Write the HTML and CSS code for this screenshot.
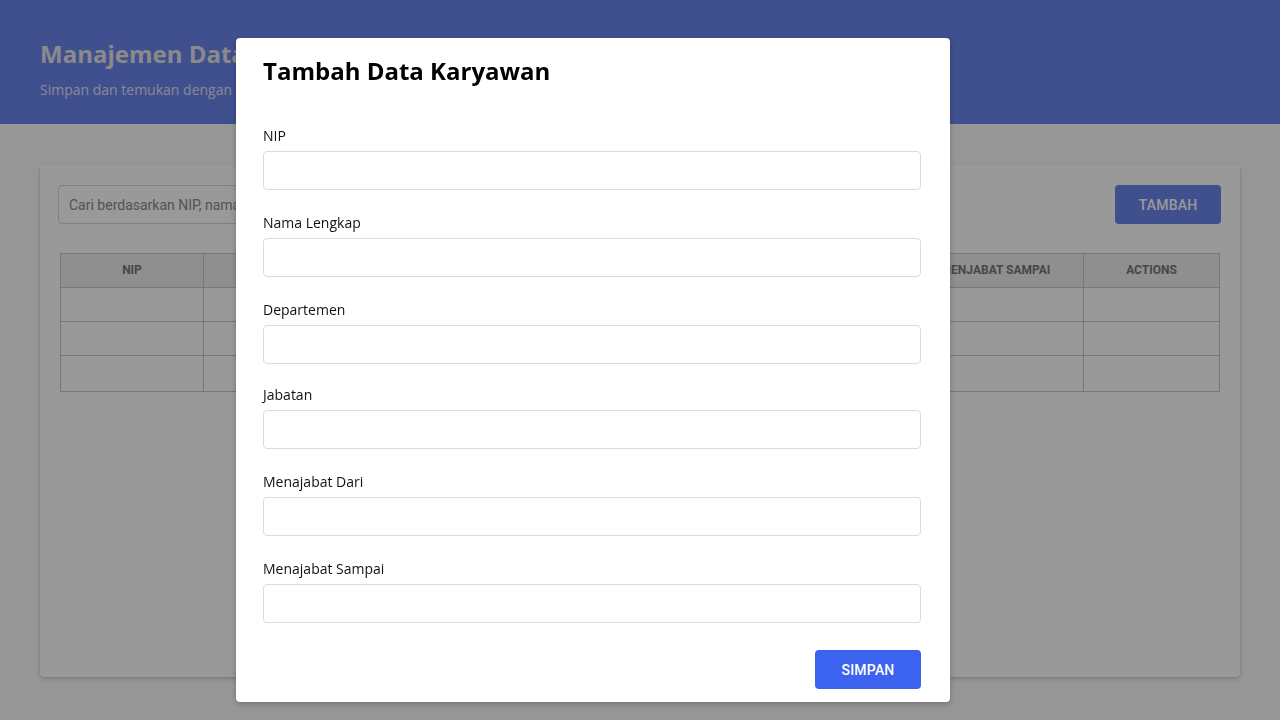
FILE: index.html
```html
<!DOCTYPE html>
<html lang="id">
<head>
<meta charset="utf-8">
<title>Manajemen Data Karyawan</title>
<link rel="stylesheet" href="styles.css">
</head>
<body>
<header class="hero">
  <h1 class="hero-title">Manajemen Data Karyawan</h1>
  <p class="hero-sub">Simpan dan temukan dengan mudah data karyawan Anda</p>
</header>
<main class="page">
  <section class="card">
    <div class="toolbar">
      <input class="search" type="text" placeholder="Cari berdasarkan NIP, nama, departemen atau jabatan">
      <button class="btn btn-add">TAMBAH</button>
    </div>
    <table class="grid">
      <thead>
        <tr>
          <th class="c-nip">NIP</th>
          <th class="c-mid">NAMA LENGKAP</th>
          <th class="c-mid">DEPARTEMEN</th>
          <th class="c-mid">JABATAN</th>
          <th class="c-mid">MENJABAT DARI</th>
          <th class="c-mid">MENJABAT SAMPAI</th>
          <th class="c-act">ACTIONS</th>
        </tr>
      </thead>
      <tbody>
        <tr><td></td><td></td><td></td><td></td><td></td><td></td><td></td></tr>
        <tr><td></td><td></td><td></td><td></td><td></td><td></td><td></td></tr>
        <tr class="last"><td></td><td></td><td></td><td></td><td></td><td></td><td></td></tr>
      </tbody>
    </table>
  </section>
</main>
<div class="overlay"></div>
<div class="modal">
  <h2 class="modal-title">Tambah Data Karyawan</h2>
  <form class="form">
    <div class="field">
      <label class="label">NIP</label>
      <input class="input" type="text">
    </div>
    <div class="field">
      <label class="label">Nama Lengkap</label>
      <input class="input" type="text">
    </div>
    <div class="field">
      <label class="label">Departemen</label>
      <input class="input" type="text">
    </div>
    <div class="field field-tight">
      <label class="label">Jabatan</label>
      <input class="input" type="text">
    </div>
    <div class="field">
      <label class="label">Menajabat Dari</label>
      <input class="input" type="text">
    </div>
    <div class="field">
      <label class="label">Menajabat Sampai</label>
      <input class="input" type="text">
    </div>
    <div class="actions">
      <button class="btn btn-save" type="button">SIMPAN</button>
    </div>
  </form>
</div>
</body>
</html>
```

FILE: styles.css
```css
* { box-sizing: border-box; }
html, body { margin: 0; padding: 0; }
body {
  width: 1280px;
  height: 720px;
  overflow: hidden;
  background: #fbfbfb;
  font-family: "Open Sans", "Noto Sans", sans-serif;
  color: #222;
}
.hero {
  height: 124px;
  background: #6b85ee;
  padding: 37px 40px 0;
}
.hero-title {
  margin: 0;
  font-size: 24px;
  font-weight: 700;
  color: #e6e6e6;
}
.hero-sub {
  margin: 10px 0 0;
  font-size: 14px;
  color: rgba(255, 255, 255, 0.8);
}
.page {
  padding: 41px 40px 0;
}
.card {
  height: 512px;
  background: #fff;
  border-radius: 4px;
  box-shadow: 0 2px 4px rgba(0, 0, 0, 0.18), 0 0 2px rgba(0, 0, 0, 0.06);
  padding: 20px 19px 0 20px;
}
.toolbar {
  display: flex;
  justify-content: space-between;
  align-items: center;
  margin-left: -2px;
}
.search {
  width: 640px;
  height: 39px;
  border: 1px solid #d6d6d6;
  border-radius: 4px;
  padding: 0 10px;
  font-family: Roboto, sans-serif;
  font-size: 14px;
  color: #333;
  outline: none;
}
.search::placeholder { color: #8a8a8a; }
.btn {
  border: 0;
  border-radius: 4px;
  color: #fff;
  font-family: Roboto, sans-serif;
  font-size: 14px;
  font-weight: 500;
  letter-spacing: 0.2px;
  width: 106px;
  cursor: pointer;
}
.btn-add {
  height: 39px;
  background: #6b85ee;
}
.grid {
  margin-top: 29px;
  width: 1160px;
  border-collapse: collapse;
  table-layout: fixed;
  font-family: Roboto, sans-serif;
}
.grid th, .grid td {
  border: 1px solid #c8c8c8;
  height: 34px;
  padding: 0 8px;
}
.grid th {
  background: #efefef;
  font-size: 12px;
  font-weight: 700;
  color: #777;
  text-align: center;
  padding-bottom: 2px;
}
.grid tr.last td { height: 36px; }
.c-nip { width: 143px; }
.c-act { width: 136px; }
.overlay {
  position: fixed;
  inset: 0;
  background: rgba(0, 0, 0, 0.4);
}
.modal {
  position: fixed;
  left: 236px;
  top: 38px;
  width: 714px;
  height: 664px;
  background: #fff;
  border-radius: 4px;
  box-shadow: 0 2px 6px rgba(0, 0, 0, 0.25);
  padding: 16px 29px 0 27px;
}
.modal-title {
  margin: 0;
  font-size: 24px;
  font-weight: 700;
  color: #000;
  line-height: 33px;
}
.form {
  display: flex;
  flex-direction: column;
  gap: 23px;
  margin-top: 39px;
}
.field {
  display: flex;
  flex-direction: column;
  gap: 6px;
}
.field-tight { margin-top: -2px; }
.label {
  font-size: 14px;
  line-height: 19px;
  color: #111;
}
.input {
  height: 39px;
  width: 100%;
  border: 1px solid #dcdcdc;
  border-radius: 4px;
  padding: 0 10px;
  font-family: "Open Sans", sans-serif;
  font-size: 14px;
  outline: none;
}
.actions {
  display: flex;
  justify-content: flex-end;
  margin-top: 4px;
}
.btn-save {
  height: 39px;
  background: #3c63f0;
}
```
